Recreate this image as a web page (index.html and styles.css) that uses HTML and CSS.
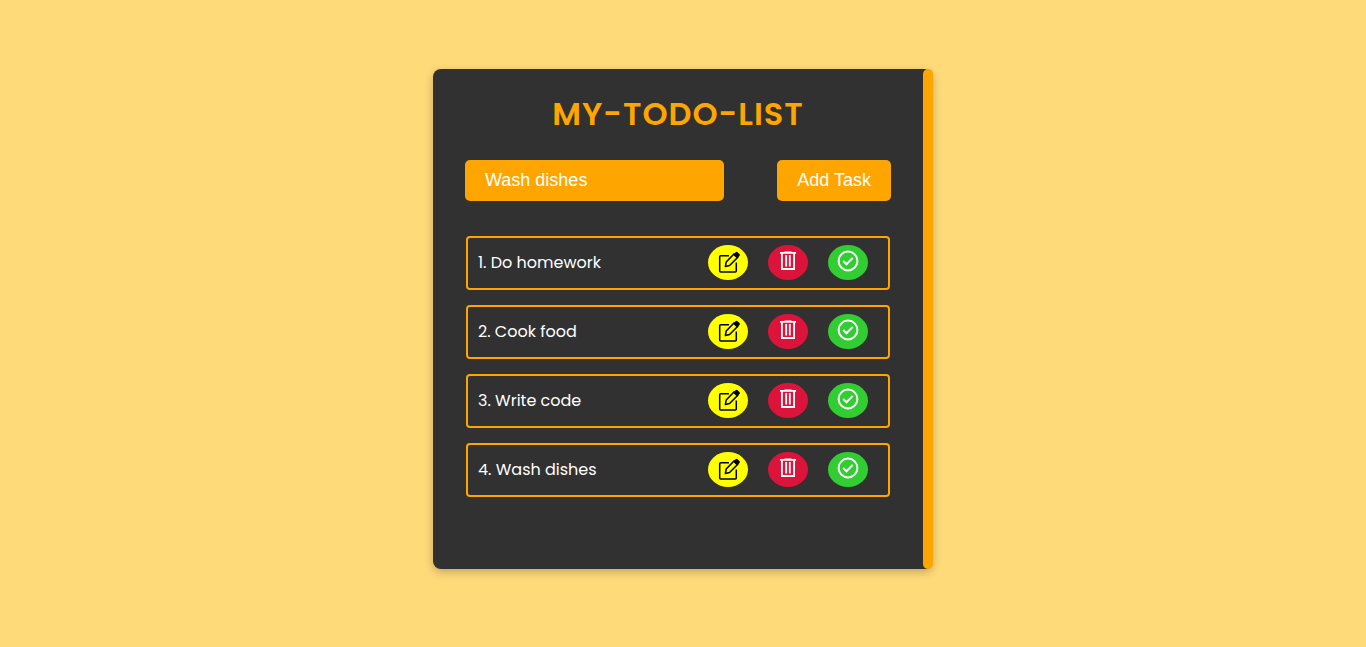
FILE: index.html
```html
<!DOCTYPE html>
<html lang="en">
<head>
<meta charset="utf-8">
<meta name="viewport" content="width=device-width, initial-scale=1">
<title>My Todo List</title>
<link rel="stylesheet" href="styles.css">
</head>
<body>
<svg class="sprite" aria-hidden="true">
  <symbol id="edit" viewBox="0 0 24 24">
    <path d="M13 6.7H4.7a1 1 0 0 0-1 1v14.4a1 1 0 0 0 1 1h14.6a1 1 0 0 0 1-1v-8.6" fill="none" stroke="#000" stroke-width="1.5"/>
    <path d="M18.2 4.7l3.6 3.6-8.2 8.2-4.2 1 .8-4.4z" fill="none" stroke="#000" stroke-width="1.5" stroke-linejoin="round"/>
    <path d="M17.2 5.7l2.4-2.4a1.4 1.4 0 0 1 2 0l1.8 1.8a1.4 1.4 0 0 1 0 2L21 9.5z" fill="#000"/>
  </symbol>
  <symbol id="trash" viewBox="0 0 24 24">
    <path d="M4 3.9h16M8.5 3.3h7M5.9 4v16h12.2V4M10.2 6v11.5M13.8 6v11.5" fill="none" stroke="#fff" stroke-width="1.8"/>
  </symbol>
  <symbol id="done" viewBox="0 0 24 24">
    <circle cx="12" cy="12" r="9.4" fill="none" stroke="#fff" stroke-width="2"/>
    <path d="M7.2 12l3.3 3.3 6.2-6.4" fill="none" stroke="#fff" stroke-width="2"/>
  </symbol>
</svg>
<main class="card">
  <div class="content">
    <h1 class="title">MY-TODO-LIST</h1>
    <form class="task-form">
      <input class="task-input" type="text" value="Wash dishes" aria-label="Task">
      <button class="add-button" type="button">Add Task</button>
    </form>
    <ul class="tasks">
      <li class="task"><span class="task-name">1. Do homework</span>
        <button class="action edit" type="button" aria-label="Edit"><svg class="icon"><use href="#edit"/></svg></button>
        <button class="action delete" type="button" aria-label="Delete"><svg class="icon"><use href="#trash"/></svg></button>
        <button class="action done" type="button" aria-label="Complete"><svg class="icon"><use href="#done"/></svg></button></li>
      <li class="task"><span class="task-name">2. Cook food</span>
        <button class="action edit" type="button" aria-label="Edit"><svg class="icon"><use href="#edit"/></svg></button>
        <button class="action delete" type="button" aria-label="Delete"><svg class="icon"><use href="#trash"/></svg></button>
        <button class="action done" type="button" aria-label="Complete"><svg class="icon"><use href="#done"/></svg></button></li>
      <li class="task"><span class="task-name">3. Write code</span>
        <button class="action edit" type="button" aria-label="Edit"><svg class="icon"><use href="#edit"/></svg></button>
        <button class="action delete" type="button" aria-label="Delete"><svg class="icon"><use href="#trash"/></svg></button>
        <button class="action done" type="button" aria-label="Complete"><svg class="icon"><use href="#done"/></svg></button></li>
      <li class="task"><span class="task-name">4. Wash dishes</span>
        <button class="action edit" type="button" aria-label="Edit"><svg class="icon"><use href="#edit"/></svg></button>
        <button class="action delete" type="button" aria-label="Delete"><svg class="icon"><use href="#trash"/></svg></button>
        <button class="action done" type="button" aria-label="Complete"><svg class="icon"><use href="#done"/></svg></button></li>
    </ul>
  </div>
  <div class="scroll-thumb"></div>
</main>
</body>
</html>
```
FILE: styles.css
```css
* {
  box-sizing: border-box;
}

body {
  margin: 0;
  min-height: 100vh;
  padding-bottom: 9px;
  display: flex;
  align-items: center;
  justify-content: center;
  background: #ffda79;
  font-family: Poppins, Inter, sans-serif;
}

.sprite {
  position: absolute;
  width: 0;
  height: 0;
}

.card {
  display: flex;
  width: 100%;
  max-width: 500px;
  min-height: 500px;
  background: #313131;
  border-radius: 8px;
  box-shadow: 0 3px 8px rgba(0, 0, 0, 0.24);
}

.content {
  flex: 1;
  padding: 21px 32px;
}

.scroll-thumb {
  width: 10px;
  background: orange;
  border-radius: 5px;
}

.title {
  margin: 0 0 22px;
  color: orange;
  font-size: 32px;
  line-height: 48px;
  font-weight: 600;
  letter-spacing: 1px;
  text-align: center;
}

.task-form {
  display: flex;
  justify-content: space-between;
  margin-bottom: 35px;
}

.task-input,
.add-button {
  height: 41px;
  padding: 0 20px;
  border: 0;
  border-radius: 5px;
  background: orange;
  color: #fff;
  font: 18px "Liberation Sans", Arial, sans-serif;
}

.task-input {
  width: 259px;
}

.tasks {
  display: flex;
  flex-direction: column;
  gap: 15px;
  margin: 0 1px;
  padding: 0;
  list-style: none;
}

.task {
  display: flex;
  align-items: center;
  gap: 20px;
  padding: 7px 20px 8px 10px;
  border: 2px solid orange;
  border-radius: 4px;
}

.task-name {
  flex: 1;
  color: #fff;
  font-size: 16px;
  line-height: 24px;
}

.action {
  display: flex;
  justify-content: center;
  width: 40px;
  height: 35px;
  padding: 4px 0 0;
  border: 0;
  border-radius: 50%;
}

.edit {
  background: yellow;
}

.delete {
  background: crimson;
}

.done {
  background: limegreen;
}

.icon {
  width: 24px;
  height: 24px;
}
```
